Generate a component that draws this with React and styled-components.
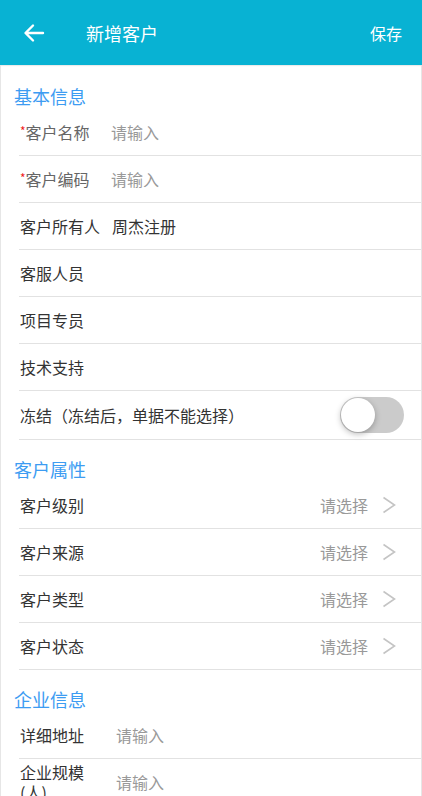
import React, { useState } from 'react';
import styled, { createGlobalStyle } from 'styled-components';

const GlobalStyle = createGlobalStyle`
  html, body {
    margin: 0;
    padding: 0;
    background: #fff;
    font-family: "Noto Sans CJK SC", "Noto Sans", sans-serif;
  }
  * { box-sizing: border-box; }
`;

const Page = styled.div`
  width: 422px;
  height: 796px;
  overflow: hidden;
  display: flex;
  flex-direction: column;
  background: #fff;
`;

const Header = styled.header`
  height: 65px;
  flex-shrink: 0;
  background: #08b2d3;
  display: flex;
  align-items: center;
  padding: 0 20px 0 22px;
  color: #fff;
  box-shadow: 0 1px 1px rgba(0, 0, 0, 0.08);
`;

const BackButton = styled.button`
  background: none;
  border: none;
  padding: 0;
  width: 24px;
  height: 24px;
  display: flex;
  align-items: center;
  justify-content: center;
  color: #fff;
  margin-right: 40px;
`;

const Title = styled.h1`
  flex: 1;
  margin: 0;
  font-size: 18px;
  font-weight: 400;
  line-height: 24px;
`;

const SaveButton = styled.button`
  background: none;
  border: none;
  padding: 0;
  color: #fff;
  font-family: inherit;
  font-size: 16px;
`;

const Body = styled.main`
  flex: 1;
  border-left: 1px solid #e6e6e6;
  border-right: 1px solid #e6e6e6;
`;

const SectionTitle = styled.h2`
  margin: 0;
  padding: ${(p) => (p.$first ? 19 : 17)}px 0 1px 13px;
  font-size: 18px;
  font-weight: 400;
  line-height: 24px;
  color: #3d9cf2;
`;

const Row = styled.div`
  margin-left: 18px;
  min-height: ${(p) => (p.$tall ? 49 : 47)}px;
  display: flex;
  align-items: center;
  border-bottom: 1px solid #e2e2e2;
  padding-right: ${(p) => p.$pr || 0}px;
`;

const Label = styled.span`
  flex-shrink: 0;
  min-width: 80px;
  margin-right: 12px;
  padding-left: 1px;
  font-size: 16px;
  line-height: 20px;
  white-space: nowrap;
  color: ${(p) => (p.$muted ? '#666' : '#333')};
`;

const FixedLabel = styled.span`
  flex-shrink: 0;
  width: 68px;
  margin-right: 29px;
  padding-left: 1px;
  font-size: 16px;
  line-height: 20px;
  color: #333;
`;

const Star = styled.span`
  color: #f01c1c;
  font-size: 12px;
  vertical-align: top;
  position: relative;
  top: -1px;
`;

const Value = styled.span`
  flex: 1;
  font-size: 16px;
  color: ${(p) => (p.$placeholder ? '#999' : '#333')};
`;

const SelectValue = styled.span`
  margin-left: auto;
  font-size: 16px;
  color: #999;
  margin-right: 14px;
`;

const SwitchTrack = styled.button`
  margin-left: auto;
  width: 64px;
  height: 36px;
  border-radius: 18px;
  border: none;
  padding: 1px;
  background: ${(p) => (p.$on ? '#08b2d3' : '#cbcbcb')};
  display: flex;
  justify-content: ${(p) => (p.$on ? 'flex-end' : 'flex-start')};
  align-items: center;
`;

const SwitchThumb = styled.span`
  width: 34px;
  height: 34px;
  border-radius: 50%;
  background: #fff;
  box-shadow: 0 2px 6px rgba(0, 0, 0, 0.28);
`;

const Chevron = () => (
  <svg width="14" height="18" viewBox="0 0 14 18">
    <polyline points="1.5,1.5 12.5,9 1.5,16.5" fill="none" stroke="#c4c4c4" strokeWidth="1.6" />
  </svg>
);

const basicRows = [
  { label: '客户名称', required: true, value: '请输入', placeholder: true },
  { label: '客户编码', required: true, value: '请输入', placeholder: true },
  { label: '客户所有人', value: '周杰注册' },
  { label: '客服人员' },
  { label: '项目专员' },
  { label: '技术支持' },
];

const selectRows = ['客户级别', '客户来源', '客户类型', '客户状态'];

const App = () => {
  const [frozen, setFrozen] = useState(false);

  return (
    <Page>
      <GlobalStyle />
      <Header>
        <BackButton aria-label="返回">
          <svg width="22" height="20" viewBox="0 0 22 20">
            <path d="M20 10H3M10 2.5L2.5 10L10 17.5" fill="none" stroke="#fff" strokeWidth="2.4" strokeLinecap="round" strokeLinejoin="round" />
          </svg>
        </BackButton>
        <Title>新增客户</Title>
        <SaveButton>保存</SaveButton>
      </Header>
      <Body>
        <SectionTitle $first>基本信息</SectionTitle>
        {basicRows.map((r) => (
          <Row key={r.label}>
            <Label $muted={r.required}>
              {r.required && <Star>*</Star>}
              {r.label}
            </Label>
            {r.value && <Value $placeholder={r.placeholder}>{r.value}</Value>}
          </Row>
        ))}
        <Row $tall $pr={17}>
          <Label>冻结（冻结后，单据不能选择）</Label>
          <SwitchTrack $on={frozen} onClick={() => setFrozen(!frozen)}>
            <SwitchThumb />
          </SwitchTrack>
        </Row>

        <SectionTitle>客户属性</SectionTitle>
        {selectRows.map((label) => (
          <Row key={label} $pr={25}>
            <Label>{label}</Label>
            <SelectValue>请选择</SelectValue>
            <Chevron />
          </Row>
        ))}

        <SectionTitle>企业信息</SectionTitle>
        <Row>
          <FixedLabel>详细地址</FixedLabel>
          <Value $placeholder>请输入</Value>
        </Row>
        <Row>
          <FixedLabel>企业规模(人)</FixedLabel>
          <Value $placeholder>请输入</Value>
        </Row>
      </Body>
    </Page>
  );
};

export default App;
